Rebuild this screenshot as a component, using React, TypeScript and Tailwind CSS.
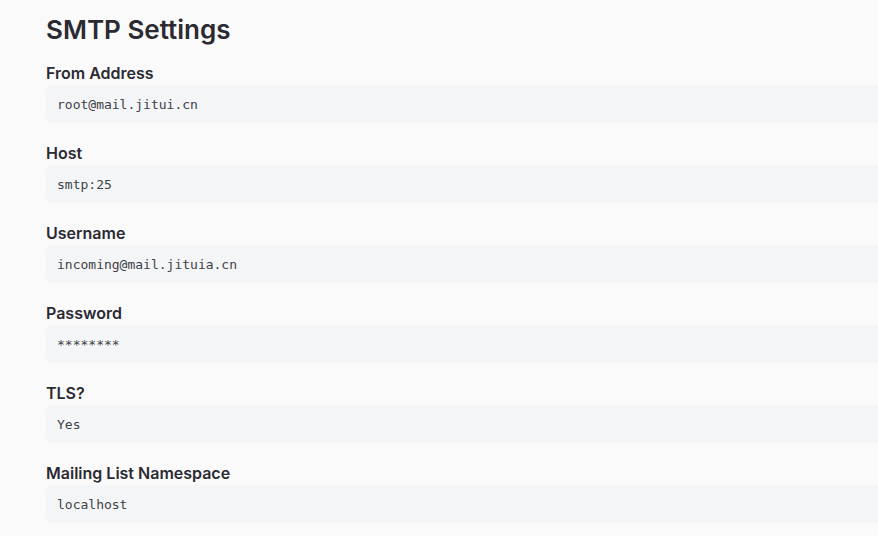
const fields = [
  { label: "From Address", value: "root@mail.jitui.cn" },
  { label: "Host", value: "smtp:25" },
  { label: "Username", value: "incoming@mail.jituia.cn" },
  { label: "Password", value: "********" },
  { label: "TLS?", value: "Yes" },
  { label: "Mailing List Namespace", value: "localhost" },
];

export default function App() {
  return (
    <div className="min-h-[536px] w-[878px] overflow-hidden bg-[#fafafa] pl-[46px] pt-[14px] font-['Inter','Liberation_Sans',sans-serif]">
      <h2 className="text-[26px] font-semibold leading-8 text-[#2b2a33]">SMTP Settings</h2>
      <div className="mt-[15px] flex flex-col gap-[18px]">
        {fields.map((f) => (
          <div key={f.label}>
            <div className="text-[16px] font-semibold leading-6 text-[#2b2a33]">{f.label}</div>
            <div className="flex h-[38px] w-[900px] items-center rounded-l-md bg-[#f4f5f7] pl-[11px] pt-[2px] font-['DejaVu_Sans_Mono',monospace] text-[13px] text-[#404048]">
              {f.value}
            </div>
          </div>
        ))}
      </div>
    </div>
  );
}
